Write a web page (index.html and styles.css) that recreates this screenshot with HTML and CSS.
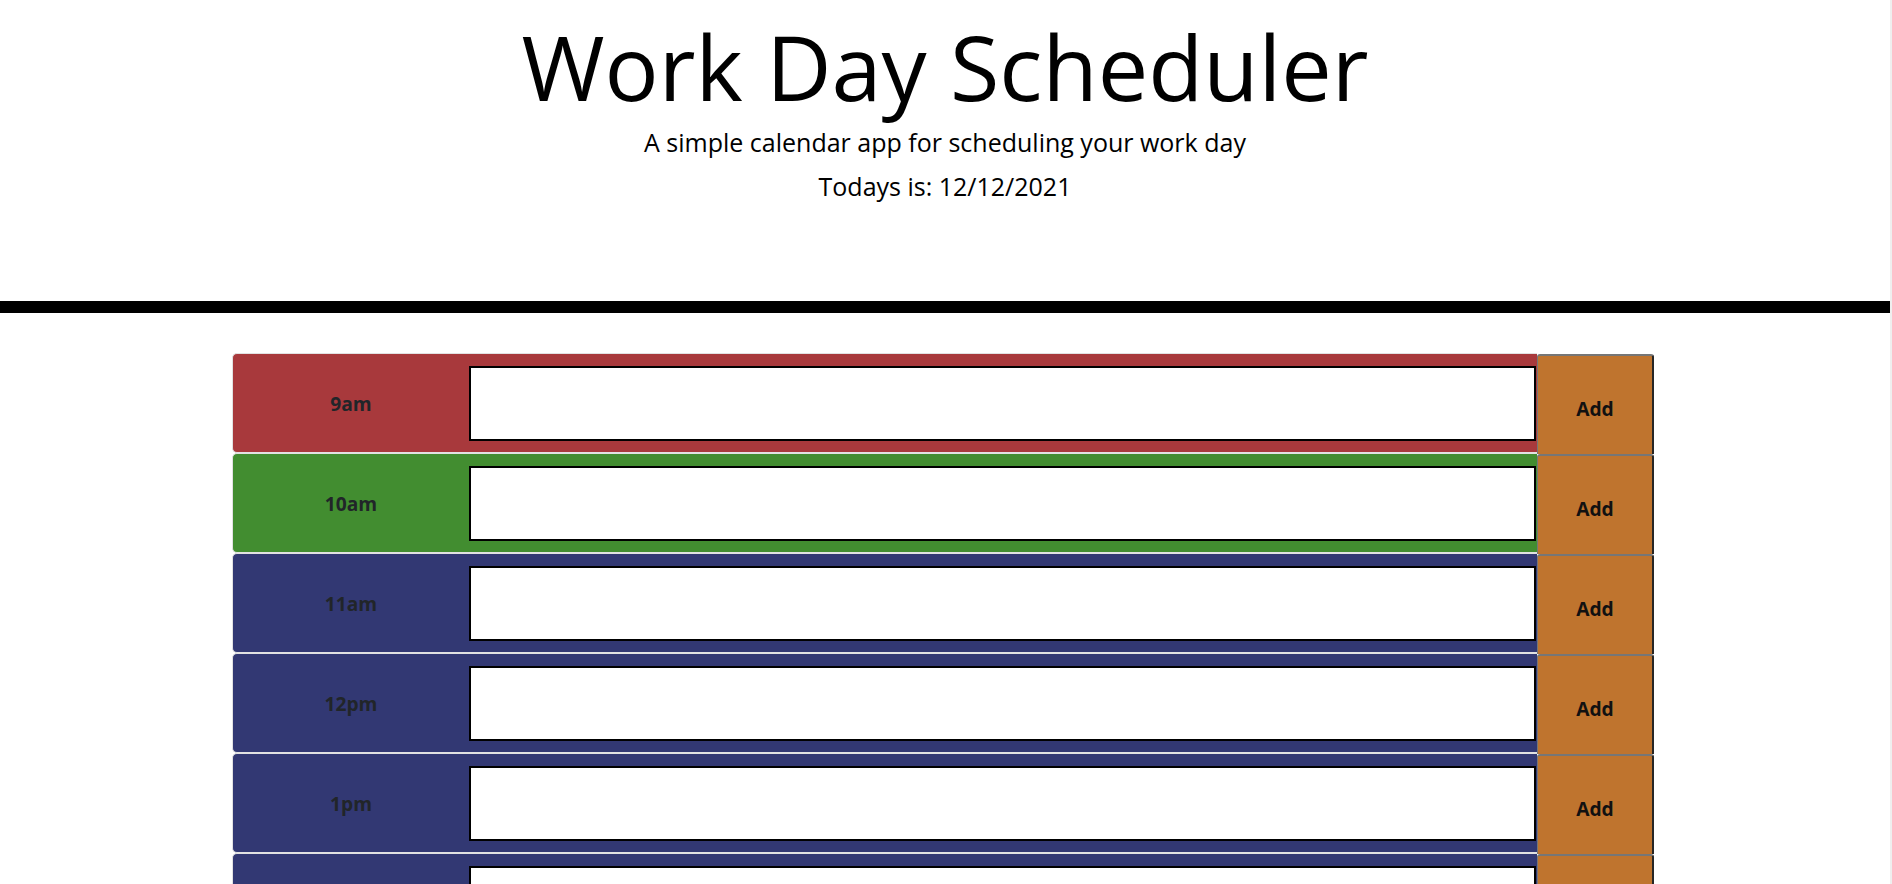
FILE: index.html
```html
<!DOCTYPE html>
<html lang="en">
<head>
<meta charset="utf-8">
<title>Work Day Scheduler</title>
<link rel="stylesheet" href="styles.css">
</head>
<body>
<header class="jumbotron">
  <h1 class="title">Work Day Scheduler</h1>
  <p class="lead">A simple calendar app for scheduling your work day</p>
  <p class="today">Todays is: 12/12/2021</p>
</header>
<div class="divider"></div>
<main class="container">
  <div class="row">
    <div class="time-block past"><div class="hour">9am</div><textarea class="description"></textarea></div>
    <button class="save-btn">Add</button>
  </div>
  <div class="row">
    <div class="time-block present"><div class="hour">10am</div><textarea class="description"></textarea></div>
    <button class="save-btn">Add</button>
  </div>
  <div class="row">
    <div class="time-block future"><div class="hour">11am</div><textarea class="description"></textarea></div>
    <button class="save-btn">Add</button>
  </div>
  <div class="row">
    <div class="time-block future"><div class="hour">12pm</div><textarea class="description"></textarea></div>
    <button class="save-btn">Add</button>
  </div>
  <div class="row">
    <div class="time-block future"><div class="hour">1pm</div><textarea class="description"></textarea></div>
    <button class="save-btn">Add</button>
  </div>
  <div class="row">
    <div class="time-block future"><div class="hour">2pm</div><textarea class="description"></textarea></div>
    <button class="save-btn">Add</button>
  </div>
  <div class="row">
    <div class="time-block future"><div class="hour">3pm</div><textarea class="description"></textarea></div>
    <button class="save-btn">Add</button>
  </div>
  <div class="row">
    <div class="time-block future"><div class="hour">4pm</div><textarea class="description"></textarea></div>
    <button class="save-btn">Add</button>
  </div>
  <div class="row">
    <div class="time-block future"><div class="hour">5pm</div><textarea class="description"></textarea></div>
    <button class="save-btn">Add</button>
  </div>
</main>
</body>
</html>
```
FILE: styles.css
```css
html {
  border-right: 2px solid #efefef;
  background: #ffffff;
}

body {
  margin: 0;
  font-family: "Open Sans", "Noto Sans", sans-serif;
  color: #000;
  background: #ffffff;
}

.jumbotron {
  text-align: center;
  padding: 12px 0 97px;
}

.title {
  margin: 0;
  font-size: 90px;
  font-weight: 400;
  line-height: 1.2;
}

.lead {
  margin: 4px 0 0;
  font-size: 25px;
  line-height: 36px;
}

.today {
  margin: 8px 0 0;
  font-size: 25px;
  line-height: 36px;
}

.divider {
  height: 12px;
  background: #000;
}

.container {
  width: 1422px;
  margin: 0 0 40px 232px;
  padding-top: 40px;
}

.row {
  display: flex;
  height: 100px;
}

.time-block {
  box-sizing: border-box;
  width: 1305px;
  display: grid;
  grid-template-columns: 236px 1fr;
  align-items: center;
  padding-right: 1px;
  border: 1px solid #e2e2e2;
  border-right: none;
  border-radius: 5px 0 0 5px;
}

.past { background: #a8393c; }
.present { background: #428d30; }
.future { background: #323873; }

.hour {
  text-align: center;
  font-size: 19.2px;
  font-weight: 700;
  color: #212529;
}

.description {
  box-sizing: border-box;
  display: block;
  width: 100%;
  height: 75px;
  margin: 0;
  border: 2px solid #000;
  border-radius: 0;
  background: #fff;
  resize: none;
  font-family: "Open Sans", sans-serif;
}

.save-btn {
  box-sizing: border-box;
  width: 117px;
  height: 100px;
  margin: 1px 0 -1px;
  padding: 6px 0 0;
  background: #bf742e;
  border-top: 2px solid #767676;
  border-left: 1px solid #767676;
  border-right: 2px solid #262626;
  border-bottom: none;
  border-radius: 3px 3px 0 0;
  font-family: "Open Sans", sans-serif;
  font-size: 19.2px;
  font-weight: 700;
  color: #111;
}
```
